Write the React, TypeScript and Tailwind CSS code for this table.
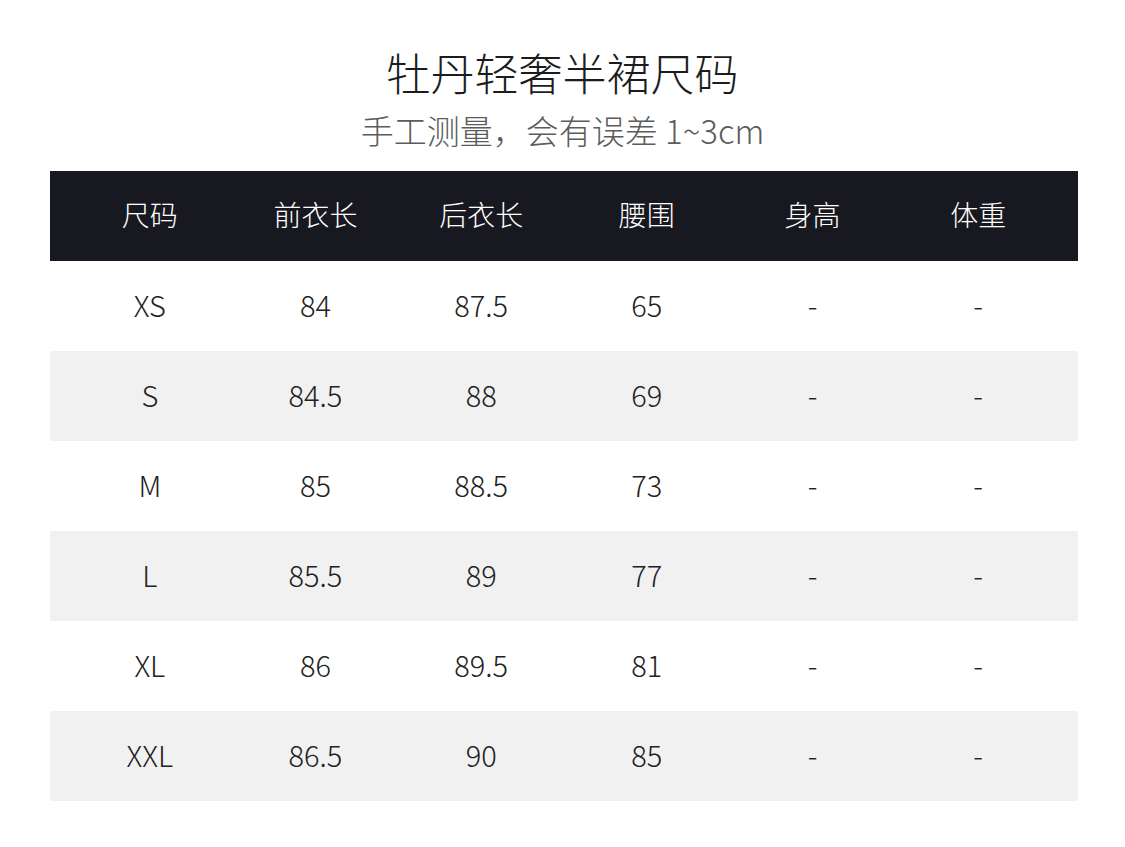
const HEAD = ["尺码", "前衣长", "后衣长", "腰围", "身高", "体重"];

// 尺码数据：尺码 / 前衣长 / 后衣长 / 腰围 / 身高 / 体重
const ROWS = [
  ["XS", "84", "87.5", "65", "-", "-"],
  ["S", "84.5", "88", "69", "-", "-"],
  ["M", "85", "88.5", "73", "-", "-"],
  ["L", "85.5", "89", "77", "-", "-"],
  ["XL", "86", "89.5", "81", "-", "-"],
  ["XXL", "86.5", "90", "85", "-", "-"],
];

export default function App() {
  return (
    <div className="min-h-[847px] w-[1125px] bg-white font-light font-['Noto_Sans_CJK_SC','Noto_Sans',sans-serif]">
      <div className="flex flex-col items-center pt-[46px]">
        <h1 className="text-[44px] leading-[52px] text-[#1c1c1c]">牡丹轻奢半裙尺码</h1>
        <p className="mt-[12px] text-[33px] leading-[40px] text-[#5c5c5c]">手工测量，会有误差 1~3cm</p>
      </div>

      <div className="mx-[50px] mt-[21px] w-[1028px]">
        <div className="grid h-[90px] grid-cols-6 items-center bg-[#181820] px-[17px] pb-[4px] text-[28px] text-white">
          {HEAD.map((h) => (
            <span key={h} className="text-center">
              {h}
            </span>
          ))}
        </div>
        {ROWS.map((r, i) => (
          <div
            key={r[0]}
            className={`grid h-[90px] grid-cols-6 items-center px-[17px] pb-[2px] text-[29px] text-[#222] ${
              i % 2 === 1 ? "bg-[#f1f1f1]" : "bg-white"
            }`}
          >
            {r.map((c, j) => (
              <span key={j} className="text-center">
                {c}
              </span>
            ))}
          </div>
        ))}
      </div>
    </div>
  );
}
